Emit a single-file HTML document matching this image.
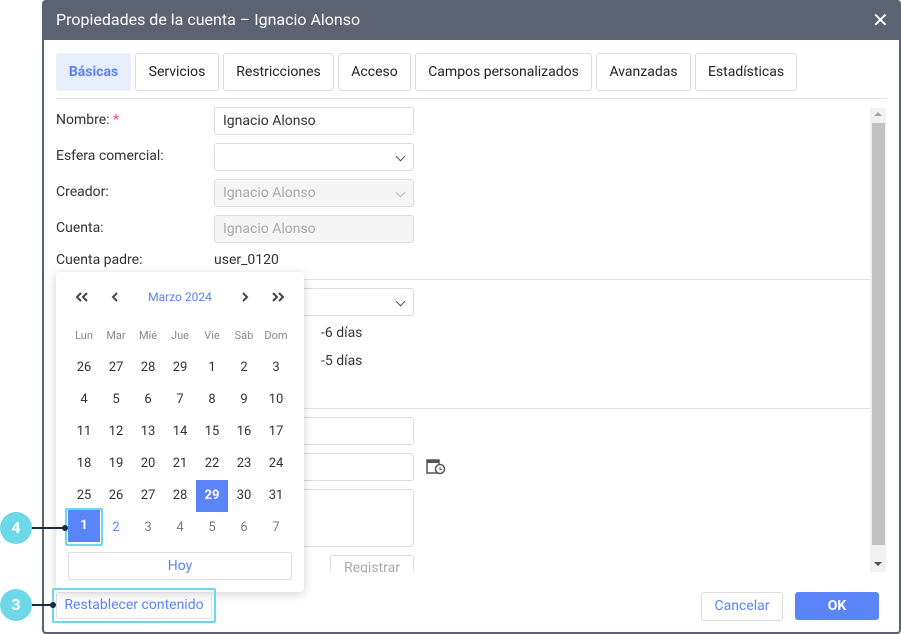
<!DOCTYPE html>
<html><head><meta charset="utf-8"><style>
*{box-sizing:border-box;margin:0;padding:0}
body{width:901px;height:634px;background:#fff;font-family:Roboto,"Liberation Sans",sans-serif;position:relative;overflow:hidden;color:#333;font-size:14px}
.a{position:absolute}
.dlg{left:42px;top:0;width:859px;height:634px;border:2px solid #5a6272;border-top:0;border-radius:4px}
.hdr{left:42px;top:0;width:859px;height:40px;background:#5b6271;border-radius:4px 4px 0 0;color:#fff;font-size:16px;line-height:40px;padding-left:14px}
.tab{top:53px;height:38px;border:1px solid #ddd;border-radius:3px;line-height:36px;text-align:center;font-size:14px;color:#222}
.inp{left:214px;width:200px;height:28px;border:1px solid #ddd;border-radius:3px;padding-left:8px;line-height:26px;font-size:14px}
.lbl{left:56px;font-size:14px;color:#333}
.hr{height:1px;background:#e3e3e3}
.chev{position:absolute;right:9px;top:9px;width:7px;height:7px;border-right:1.5px solid #555;border-bottom:1.5px solid #555;transform:rotate(45deg)}
.cal{left:56px;top:272px;width:248px;height:320px;background:#fff;border-radius:4px;box-shadow:0 2px 10px rgba(0,0,0,.18)}
.c{position:absolute;width:32px;height:32px;line-height:32px;text-align:center;font-size:13px;color:#333}
.btn{border:1px solid #ddd;border-radius:3px;text-align:center;color:#5b84f0}
.circ{width:32px;height:32px;border-radius:50%;background:#6cd8e8;color:#fff;font-weight:bold;font-size:16px;text-align:center;line-height:32px}
</style></head><body>
<div class="a dlg"></div>
<div class="a hdr">Propiedades de la cuenta – Ignacio Alonso</div>
<div class="a" style="left:872px;top:9px;color:#fff;font-size:20px;line-height:22px">✕</div>
<div class="a tab" style="left:56px;width:75px;background:#e8eefc;border-color:#e8eefc;color:#5b84f0;font-weight:bold">Básicas</div>
<div class="a tab" style="left:135px;width:84px">Servicios</div>
<div class="a tab" style="left:223px;width:111px">Restricciones</div>
<div class="a tab" style="left:338px;width:73px">Acceso</div>
<div class="a tab" style="left:415px;width:177px">Campos personalizados</div>
<div class="a tab" style="left:596px;width:95px">Avanzadas</div>
<div class="a tab" style="left:695px;width:102px">Estadísticas</div>
<div class="a hr" style="left:56px;top:98px;width:831px"></div>
<div class="a lbl" style="top:112px">Nombre: <span style="color:#e55">*</span></div>
<div class="a lbl" style="top:148px">Esfera comercial:</div>
<div class="a lbl" style="top:184px">Creador:</div>
<div class="a lbl" style="top:220px">Cuenta:</div>
<div class="a lbl" style="top:252px">Cuenta padre:</div>
<div class="a inp" style="top:107px">Ignacio Alonso</div>
<div class="a inp" style="top:143px"><span class="chev"></span></div>
<div class="a inp" style="top:179px;background:#f5f5f5;color:#aaa">Ignacio Alonso<span class="chev" style="border-color:#bbb"></span></div>
<div class="a inp" style="top:215px;background:#f5f5f5;color:#aaa">Ignacio Alonso</div>
<div class="a" style="left:214px;top:252px">user_0120</div>
<div class="a hr" style="left:56px;top:279px;width:814px"></div>
<div class="a inp" style="top:288px"><span class="chev"></span></div>
<div class="a" style="left:321px;top:325px">-6 días</div>
<div class="a" style="left:321px;top:353px">-5 días</div>
<div class="a hr" style="left:56px;top:408px;width:814px"></div>
<div class="a inp" style="top:417px"></div>
<div class="a inp" style="top:453px"></div>
<div class="a inp" style="top:489px;height:58px"></div>
<svg class="a" style="left:426px;top:458px" width="20" height="18" viewBox="0 0 20 18"><rect x="1" y="2" width="12" height="13" fill="none" stroke="#555" stroke-width="1.5"/><rect x="1" y="2" width="12" height="3" fill="#555"/><circle cx="14" cy="11" r="4.5" fill="#fff" stroke="#555" stroke-width="1.5"/><path d="M14 9v2.5h2" stroke="#555" fill="none"/></svg>
<div class="a btn" style="left:330px;top:555px;width:84px;height:18px;color:#aaa;line-height:24px;overflow:hidden;border-bottom:0">Registrar</div>
<div class="a" style="left:870px;top:108px;width:16px;height:464px;background:#f1f1f1"></div>
<div class="a" style="left:872px;top:123px;width:13px;height:422px;background:#c1c1c1"></div>
<div class="a" style="left:874px;top:112px;border:4px solid transparent;border-bottom-color:#a3a3a3;border-top:0"></div>
<div class="a" style="left:874px;top:562px;border:4px solid transparent;border-top-color:#505050;border-bottom:0"></div>
<div class="a btn" style="left:701px;top:592px;width:82px;height:29px;line-height:27px">Cancelar</div>
<div class="a" style="left:795px;top:592px;width:84px;height:28px;line-height:28px;background:#5b84f8;border-radius:3px;color:#fff;text-align:center;font-weight:bold">OK</div>
<div class="a cal">
<svg class="a" style="left:0;top:0" width="248" height="50"><g fill="none" stroke="#444" stroke-width="2"><path d="M25 21l-4 4 4 4M31 21l-4 4 4 4M61 21l-4 4 4 4M187 21l4 4-4 4M217 21l4 4-4 4M223 21l4 4-4 4"/></g></svg>
<div class="a" style="left:76px;top:18px;width:96px;text-align:center;color:#5b84f0;font-size:12px">Marzo 2024</div>
</div>
<div id="g"></div>
<div class="a btn" style="left:68px;top:552px;width:224px;height:28px;line-height:26px">Hoy</div>
<div class="a" style="left:52px;top:588px;width:164px;height:35px;border:2px solid #6cd8e8;border-radius:2px"></div>
<div class="a btn" style="left:56px;top:592px;width:156px;height:27px;line-height:25px">Restablecer contenido</div>
<div class="a" style="left:65px;top:508px;width:38px;height:38px;border:2px solid #6cd8e8;border-radius:2px"></div>
<div class="a circ" style="left:0;top:512px">4</div>
<div class="a circ" style="left:0;top:589px">3</div>
<div class="a" style="left:32px;top:527px;width:33px;height:2px;background:#1a2a44"></div>
<div class="a" style="left:62px;top:525px;width:6px;height:6px;border-radius:50%;background:#1a2a44"></div>
<div class="a" style="left:32px;top:604px;width:22px;height:2px;background:#1a2a44"></div>
<div class="a" style="left:50px;top:602px;width:6px;height:6px;border-radius:50%;background:#1a2a44"></div>
<script>
var h='',d=['Lun','Mar','Mié','Jue','Vie','Sáb','Dom'];
for(var i=0;i<7;i++)h+='<div class="c" style="left:'+(68+32*i)+'px;top:320px;font-size:11px;color:#888">'+d[i]+'</div>';
var days=[26,27,28,29];for(var k=1;k<=31;k++)days.push(k);for(k=1;k<=7;k++)days.push(k);
for(var j=0;j<days.length;j++){var r=Math.floor(j/7),c=j%7,st='left:'+(68+32*c)+'px;top:'+(352+32*r)+'px;';
var n=days[j];
if(r==4&&c==4)st+='top:480px;background:#5b84f8;color:#fff;font-weight:bold;';
if(r==5){if(c==0)st+='top:510px;background:#5b84f8;color:#fff;font-weight:bold;';else if(c==1)st+='color:#5b84f0;';else st+='color:#777;';}
h+='<div class="c" style="'+st+'">'+n+'</div>';}
document.getElementById('g').innerHTML=h;
</script>
</body></html>
